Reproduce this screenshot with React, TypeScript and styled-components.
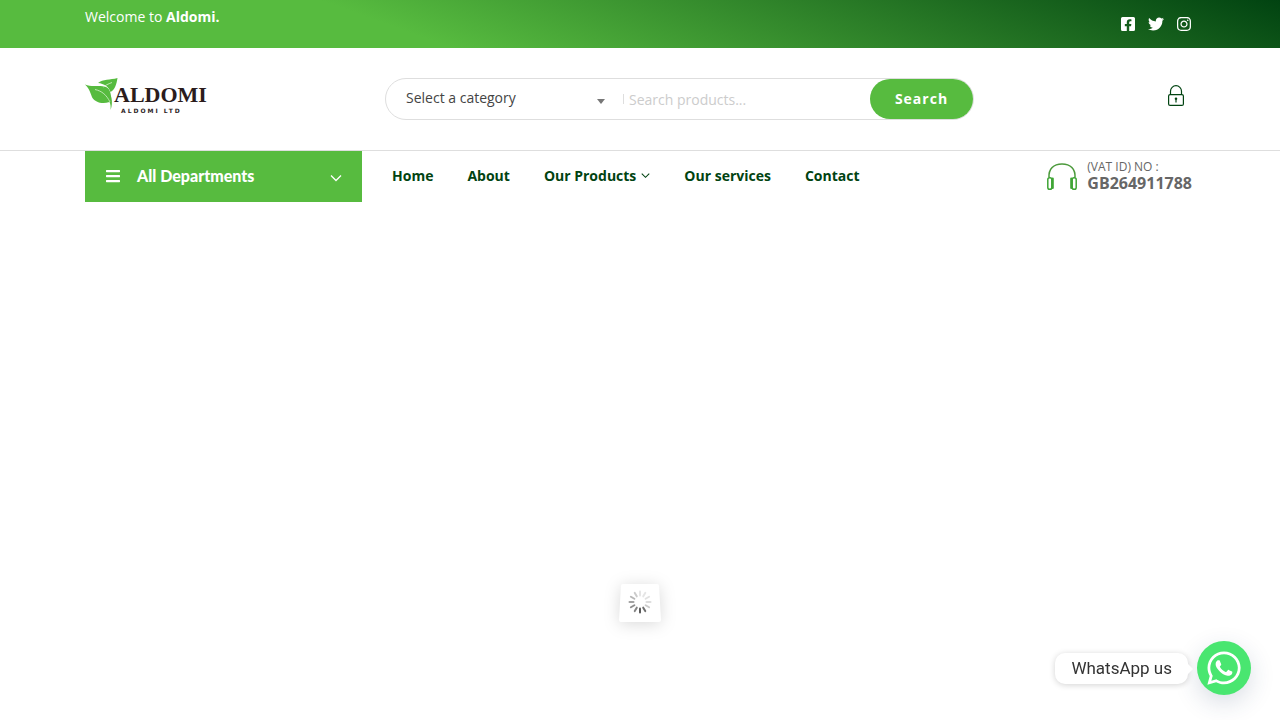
import React from "react";
import styled, { createGlobalStyle } from "styled-components";
import { FaFacebookSquare, FaTwitter, FaInstagram, FaBars, FaWhatsapp } from "react-icons/fa";

const green = "#57bb3f";
const dark = "#014311";

const Global = createGlobalStyle`
  * { box-sizing: border-box; }
  body { margin: 0; background: #fff; color: #444; font: 14px/24px "Open Sans", sans-serif; }
  a { color: inherit; text-decoration: none; }
  button, input, select { font: inherit; }
`;
const Container = styled.div`
  max-width: 1110px;
  margin: 0 auto;
  display: flex;
`;
const TopBar = styled.div`
  background: linear-gradient(20deg, ${green} 32%, ${dark} 100%);
  color: #fff;
`;
const TopInner = styled(Container)`
  height: 48px;
  justify-content: space-between;
  align-items: center;
  padding-right: 3px;
`;
const Welcome = styled.p`
  margin: 0;
  align-self: flex-start;
  padding-top: 5px;
`;
const Socials = styled.div`
  display: flex;
  gap: 12px;
  font-size: 16px;
  a { display: flex; }
`;
const Header = styled.header`
  border-bottom: 1px solid #dedede;
`;
const HeaderInner = styled(Container)`
  padding: 30px 11px 30px 0;
  align-items: flex-start;
`;
const LogoLink = styled.a`
  flex: 0 0 300px;
  svg { display: block; }
`;
const SearchForm = styled.form`
  display: flex;
  flex: 0 1 589px;
  height: 42px;
  border: 1px solid #dedede;
  border-radius: 21px;
`;
const SelectWrap = styled.div`
  position: relative;
  flex: 0 0 238px;
  border-radius: 21px;
  &::before {
    content: "";
    position: absolute;
    right: 19px;
    top: 20px;
    border: 4px solid transparent;
    border-top: 5px solid #777;
    border-bottom: 0;
  }
  &::after {
    content: "";
    position: absolute;
    right: 0;
    top: 15px;
    height: 10px;
    border-right: 1px solid #dedede;
  }
`;
const Select = styled.select`
  appearance: none;
  width: 100%;
  height: 37px;
  padding: 0 20px;
  border: 0;
  background: transparent;
  color: #444;
`;
const SearchInput = styled.input`
  flex: 1;
  min-width: 0;
  height: 40px;
  padding: 0 5px;
  border: 0;
  background: transparent;
  &::placeholder { color: #ccc; opacity: 1; }
`;
const SearchButton = styled.button`
  flex: 0 0 103px;
  border: 0;
  border-radius: 20px;
  background: ${green};
  color: #fff;
  font-weight: 700;
  letter-spacing: 1px;
`;
const Account = styled.a`
  margin: 7px 0 0 auto;
  svg { display: block; }
`;
const NavInner = styled(Container)`
  height: 51px;
  align-items: center;
  padding-right: 3px;
`;
const Departments = styled.button`
  display: flex;
  align-items: center;
  flex: 0 0 277px;
  align-self: stretch;
  padding: 0 20px;
  border: 0;
  background: ${green};
  color: #fff;
  font-family: Lato, sans-serif;
  font-size: 16px;
  font-weight: 900;
  padding-bottom: 2px;
  span { margin-left: 16px; }
  svg:last-child { margin: 4px 0 0 auto; }
`;
const Menu = styled.nav`
  display: flex;
  gap: 34px;
  margin-left: 30px;
  padding-bottom: 2px;
  color: ${dark};
  font-weight: 700;
  a { display: flex; align-items: center; gap: 5px; white-space: nowrap; }
`;
const Vat = styled.div`
  display: flex;
  align-items: center;
  gap: 10px;
  margin-left: auto;
  color: #666;
`;
const VatText = styled.div`
  padding-bottom: 4px;
  font-size: 12px;
  line-height: 16px;
  strong { display: block; font-size: 16px; }
`;
const Loader = styled.div`
  position: fixed;
  left: 50%;
  bottom: 98px;
  transform: translateX(-50%);
  svg { display: block; filter: drop-shadow(0 2px 8px rgba(0, 0, 0, 0.15)); overflow: visible; }
`;
const Chat = styled.a`
  position: fixed;
  right: 29px;
  bottom: 25px;
  display: flex;
  align-items: center;
  gap: 9px;
`;
const ChatLabel = styled.span`
  position: relative;
  padding: 0 16px;
  border-radius: 10px;
  background: #fff;
  box-shadow: 0 1px 6px rgba(0, 0, 0, 0.18);
  color: #333;
  font: 17px/31px Roboto, sans-serif;
  &::after {
    content: "";
    position: absolute;
    left: 100%;
    top: 11px;
    border: 5px solid transparent;
    border-left-color: #fff;
    border-right: 0;
  }
`;
const ChatCircle = styled.span`
  display: grid;
  place-items: center;
  width: 54px;
  height: 54px;
  border-radius: 50%;
  background: #49e670;
  box-shadow: 0 8px 24px rgba(36, 60, 100, 0.17);
  color: #fff;
`;

const Chevron = ({ size, width }: { size: number; width: number }) => (
  <svg width={size} height={size} viewBox="0 0 12 12" fill="none" stroke="currentColor" strokeWidth={width} aria-hidden="true">
    <path d="M1 3.5 6 8.5 11 3.5" />
  </svg>
);

const Logo = () => (
  <svg width="124" height="40" viewBox="0 0 124 40" role="img" aria-label="Aldomi Ltd">
    <path d="M13 5C18 1 25 2 32.500 0C31.500 6 30 12 25.500 14C24 9 19 5.500 13 5Z" fill={green} />
    <path d="M0 6.500C7 9.500 15 6.500 21 9C26 11.500 25.500 17 26.500 20C27.300 24 27 28 25.600 32C25.800 28 25.500 26 24.500 24C17 26.500 10 24 7.500 20C5.500 16 5 11 0 6.500Z" fill={green} />
    <path d="M10 11.500C17 13 21.500 17 25 24M27 4.500C23 6 20 7.500 18.500 9" fill="none" stroke="#d5f0cc" strokeWidth="0.8" />
    <text x="29" y="24" fontFamily="Liberation Serif, serif" fontSize="22" fontWeight="700" fill="#2b1c1c">ALDOMI</text>
    <text x="36" y="35" fontFamily="DejaVu Sans, sans-serif" fontSize="6" fontWeight="700" letterSpacing="2" fill="#2b1c1c">ALDOMI LTD</text>
  </svg>
);

const Lock = () => (
  <svg width="16" height="22" viewBox="0 0 16 22" fill="none" stroke={dark} strokeWidth="1.200" aria-hidden="true">
    <rect x="0.6" y="9.600" width="14.800" height="10.800" rx="1.500" />
    <path d="M2.500 9.500V6.200a5.500 5.500 0 0 1 11 0V9.500" />
    <path d="M8 15v2.500" strokeWidth="1.200" />
    <circle cx="8" cy="13.700" r="0.700" fill={dark} />
  </svg>
);

const Headset = () => (
  <svg width="30" height="27" viewBox="0 0 30 27" fill="none" stroke="#3fa535" aria-hidden="true">
    <path d="M2 14.500C1.500 6 6.500 1 15 1s13.500 5 13 13.500" stroke="#4c9a3c" strokeWidth="1.600" />
    <rect x="0.800" y="14.700" width="4" height="11.500" rx="1.800" strokeWidth="1.500" />
    <rect x="25.200" y="14.700" width="4" height="11.500" rx="1.800" strokeWidth="1.500" />
    <path d="M5.700 15.500v9.500M24.300 15.500v9.500" strokeWidth="2.200" strokeLinecap="round" />
  </svg>
);

const spokes = [0.12, 0.12, 0.14, 0.16, 0.25, 0.7, 0.8, 0.6, 0.55, 0.45, 0.35, 0.25];
const Spinner = () => (
  <svg width="42" height="38" viewBox="0 0 42 38" aria-hidden="true">
    <path d="M4 0H38Q40 0 40 2L42 36Q42 38 40 38H2Q0 38 0 36L2 2Q2 0 4 0Z" fill="#fff" />
    {spokes.map((o, i) => (
      <path key={i} d="M21 11.500V7.500" stroke="#333" strokeWidth="2" strokeLinecap="round" opacity={o} transform={`rotate(${i * 30} 21 18)`} />
    ))}
  </svg>
);

export default function App() {
  return (
    <>
      <Global />
      <TopBar>
        <TopInner>
          <Welcome>Welcome to <b>Aldomi.</b></Welcome>
          <Socials>
            <a href="#facebook" aria-label="Facebook"><FaFacebookSquare /></a>
            <a href="#twitter" aria-label="Twitter"><FaTwitter /></a>
            <a href="#instagram" aria-label="Instagram"><FaInstagram /></a>
          </Socials>
        </TopInner>
      </TopBar>
      <Header>
        <HeaderInner>
          <LogoLink href="#home"><Logo /></LogoLink>
          <SearchForm>
            <SelectWrap>
              <Select aria-label="Category"><option>Select a category</option></Select>
            </SelectWrap>
            <SearchInput type="text" aria-label="Search products" placeholder="Search products..." />
            <SearchButton type="button">Search</SearchButton>
          </SearchForm>
          <Account href="#account" aria-label="Account"><Lock /></Account>
        </HeaderInner>
      </Header>
      <NavInner>
        <Departments type="button">
          <FaBars size={16} />
          <span>All Departments</span>
          <Chevron size={12} width={1.3} />
        </Departments>
        <Menu>
          <a href="#home">Home</a>
          <a href="#about">About</a>
          <a href="#products">Our Products <Chevron size={9} width={1.4} /></a>
          <a href="#services">Our services</a>
          <a href="#contact">Contact</a>
        </Menu>
        <Vat>
          <Headset />
          <VatText>(VAT ID) NO :<strong>GB264911788</strong></VatText>
        </Vat>
      </NavInner>
      <Loader role="status" aria-label="Loading"><Spinner /></Loader>
      <Chat href="#whatsapp">
        <ChatLabel>WhatsApp us</ChatLabel>
        <ChatCircle><FaWhatsapp size={38} /></ChatCircle>
      </Chat>
    </>
  );
}
